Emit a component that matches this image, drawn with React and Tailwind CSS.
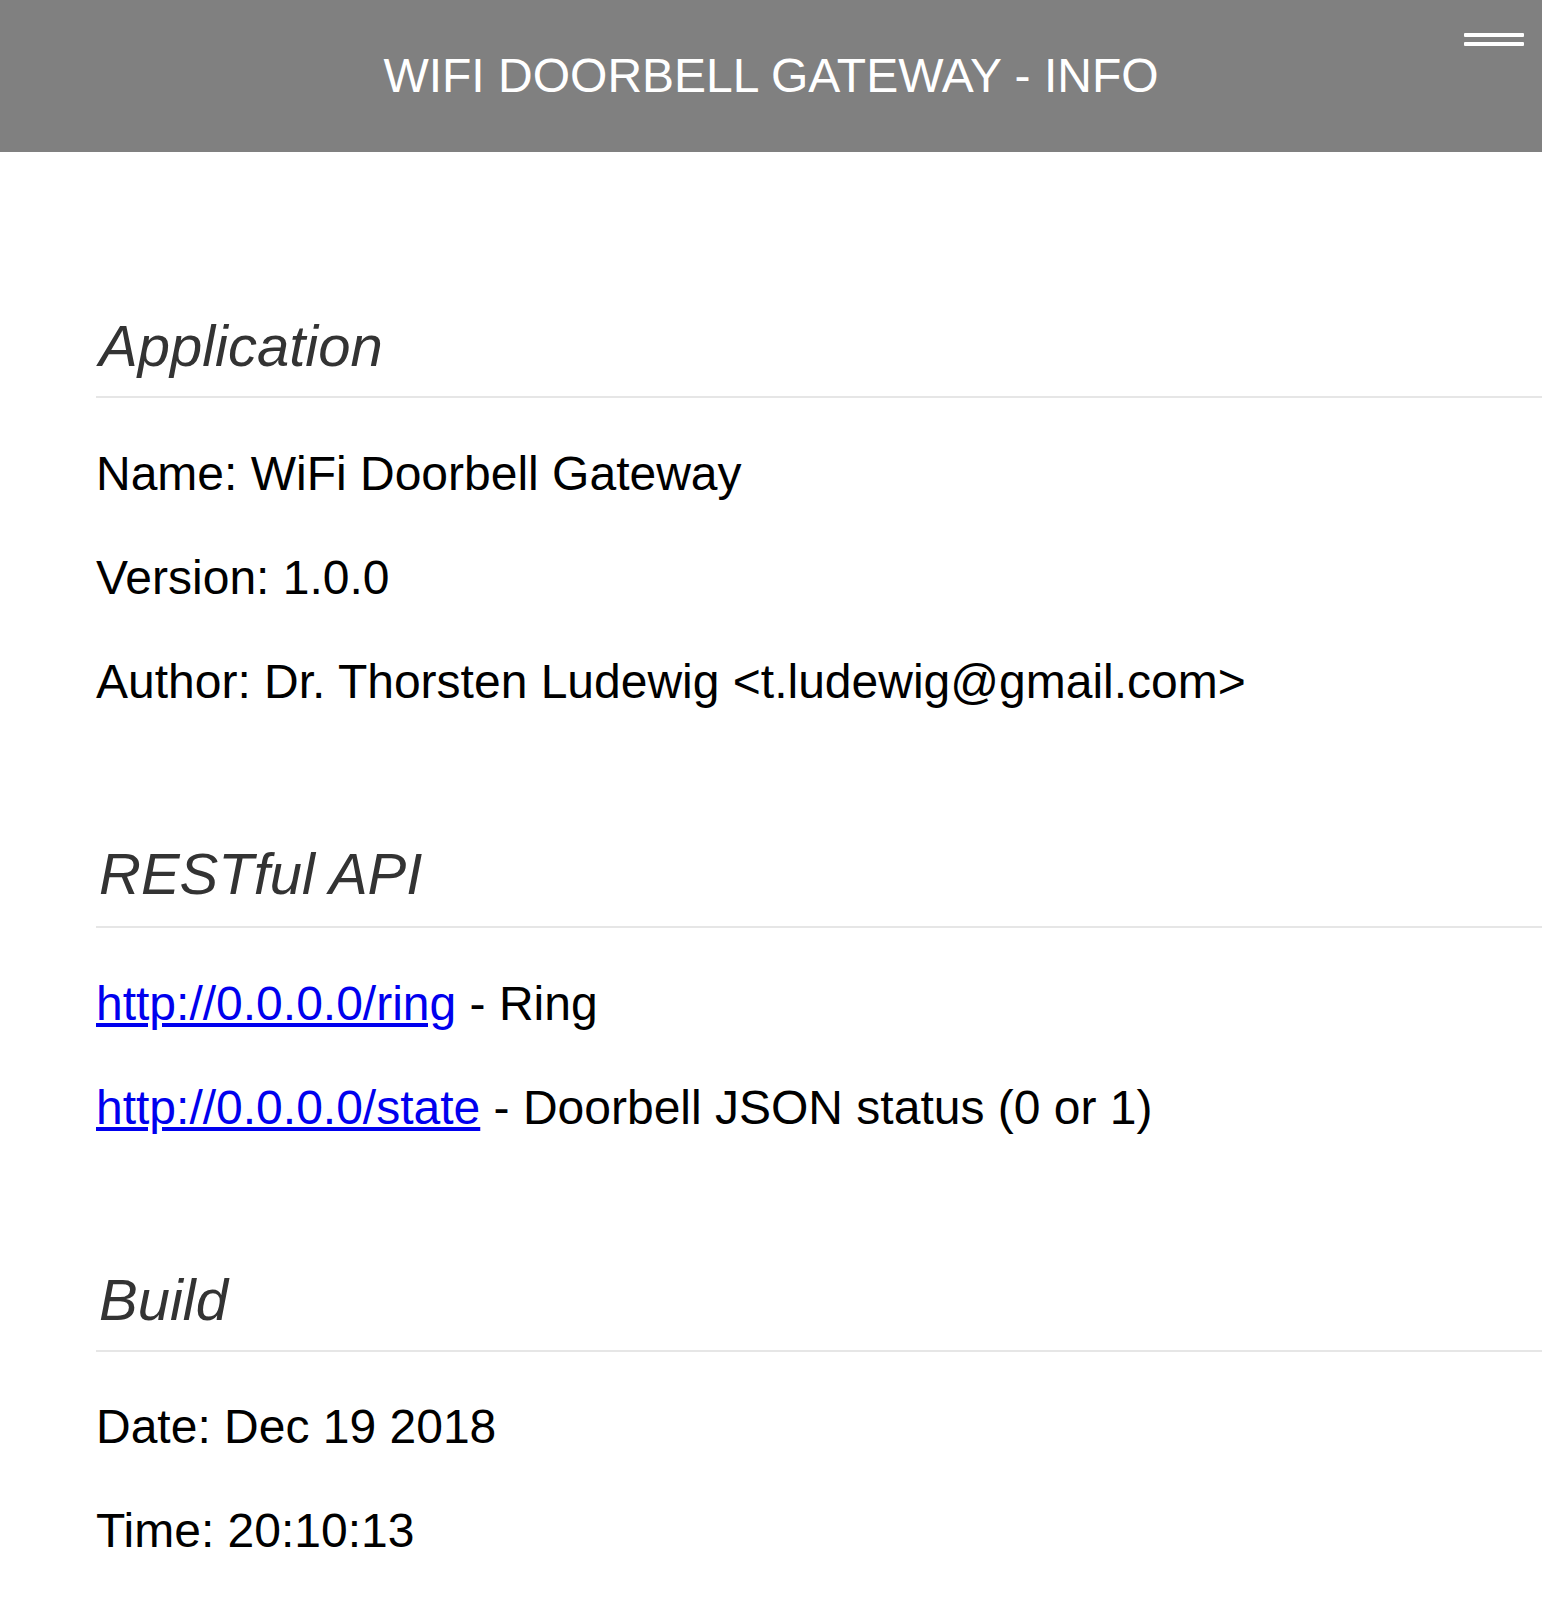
export default function App() {
  const font = { fontFamily: '"Liberation Sans", Helvetica, Arial, sans-serif' };
  return (
    <div className="min-h-[1612px] bg-white text-black" style={font}>
      <header className="relative h-[152px] bg-[#808080] flex items-center justify-center">
        <h1 className="text-[48px] leading-normal text-white font-normal">
          WIFI DOORBELL GATEWAY - INFO
        </h1>
        <div className="absolute right-[18px] top-[33px] w-[60px] flex flex-col gap-[5px]">
          <div className="h-[4px] bg-white rounded-[1px]" />
          <div className="h-[4px] bg-white rounded-[1px]" />
        </div>
      </header>

      <section>
        <h2 className="mt-[162px] ml-[96px] pl-[3px] pb-[18px] border-b-2 border-[#e6e6e6] text-[58px] leading-[64px] italic font-normal text-[#333333]">
          Application
        </h2>
        <div className="pl-[96px] pt-[49px] flex flex-col gap-[50px] text-[48px] leading-[54px]">
          <p>Name: WiFi Doorbell Gateway</p>
          <p>Version: 1.0.0</p>
          <p>Author: Dr. Thorsten Ludewig &lt;t.ludewig@gmail.com&gt;</p>
        </div>
      </section>

      <section>
        <h2 className="mt-[133px] ml-[96px] pl-[3px] pb-[20px] border-b-2 border-[#e6e6e6] text-[58px] leading-[64px] italic font-normal text-[#333333]">
          RESTful API
        </h2>
        <div className="pl-[96px] pt-[49px] flex flex-col gap-[50px] text-[48px] leading-[54px]">
          <p>
            <a href="#" className="text-[#0000ee] underline">http://0.0.0.0/ring</a> - Ring
          </p>
          <p>
            <a href="#" className="text-[#0000ee] underline">http://0.0.0.0/state</a> - Doorbell JSON status (0 or 1)
          </p>
        </div>
      </section>

      <section>
        <h2 className="mt-[133px] ml-[96px] pl-[3px] pb-[18px] border-b-2 border-[#e6e6e6] text-[58px] leading-[64px] italic font-normal text-[#333333]">
          Build
        </h2>
        <div className="pl-[96px] pt-[48px] flex flex-col gap-[50px] text-[48px] leading-[54px]">
          <p>Date: Dec 19 2018</p>
          <p>Time: 20:10:13</p>
        </div>
      </section>
    </div>
  );
}
